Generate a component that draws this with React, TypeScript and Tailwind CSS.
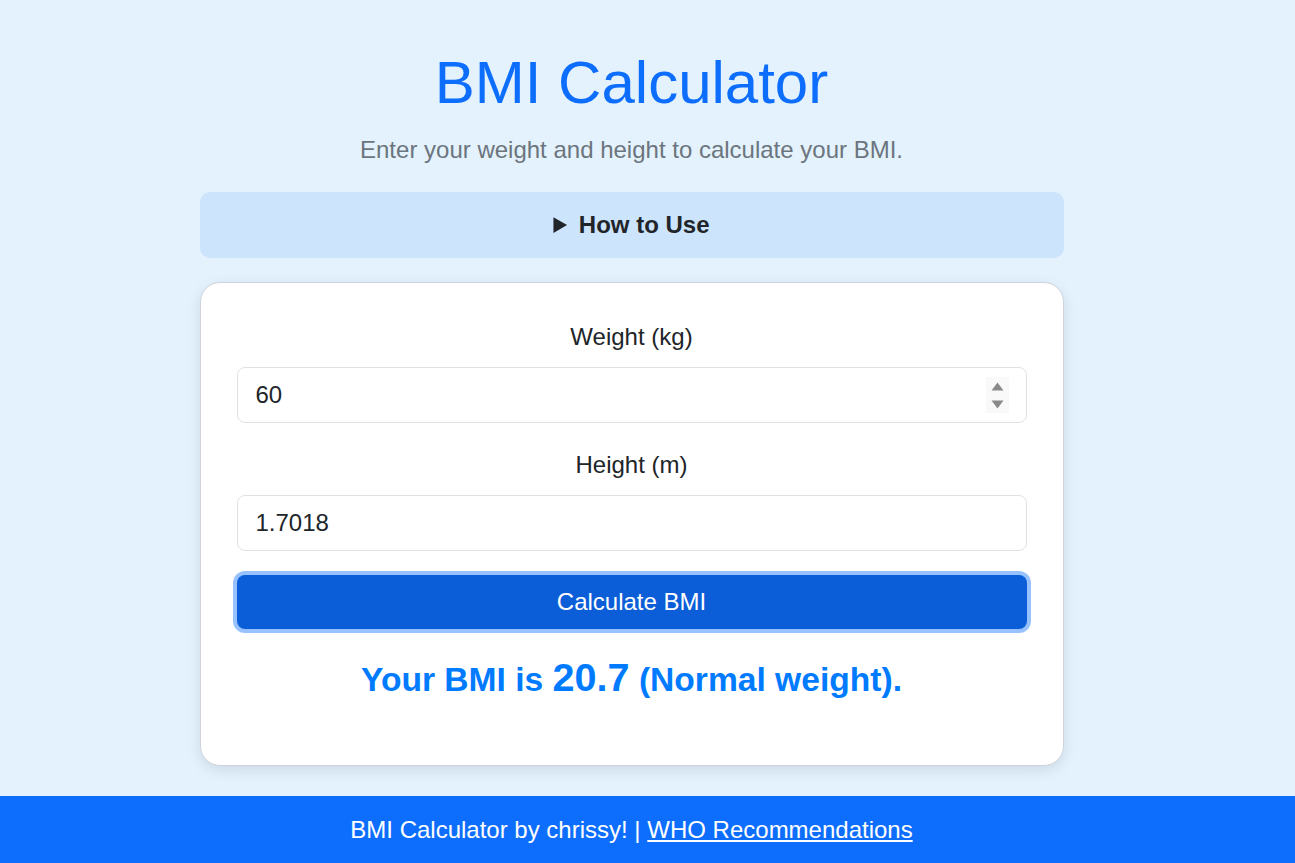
import { useState } from "react";

const font = { fontFamily: '"Liberation Sans", Arial, sans-serif' };

export default function App() {
  const [weight, setWeight] = useState("60");
  const [height, setHeight] = useState("1.7018");

  return (
    <div className="min-h-[863px] bg-[#e3f2fd] flex flex-col text-[#212529]" style={font}>
      <main className="w-[1263px] flex flex-col items-center pt-[47px]">
        <h1 className="text-[60px] leading-[72px] text-[#0d6efd]">BMI Calculator</h1>
        <p className="mt-[17px] text-[24px] leading-[28px] text-[#6c757d]">
          Enter your weight and height to calculate your BMI.
        </p>

        <details className="mt-[28px] w-[864px] rounded-[10px] bg-[#cce4fc]">
          <summary className="py-[19px] text-center text-[24px] leading-[28px] font-bold text-[#212529] cursor-pointer">
            How to Use
          </summary>
        </details>

        <div className="mt-[24px] w-[864px] h-[484px] bg-white rounded-[20px] border border-[#cfd4da] shadow-[0_4px_14px_rgba(0,0,0,0.1)] px-[36px] pt-[40px] flex flex-col">
          <label className="text-center text-[24px] leading-[28px]">Weight (kg)</label>
          <div className="relative mt-[16px]">
            <input
              value={weight}
              onChange={(e) => setWeight(e.target.value)}
              className="w-full h-[56px] rounded-[8px] border border-[#dee2e6] pl-[18px] text-[24px] outline-none"
            />
            <div className="absolute right-[18px] top-[10px] w-[23px] h-[36px] bg-[#f9f9f9] flex flex-col items-center justify-center gap-[9px]">
              <svg width="13" height="9" viewBox="0 0 13 9"><path d="M6.5 0.5 L12.5 8.5 L0.5 8.5 Z" fill="#8a8a8a" /></svg>
              <svg width="13" height="9" viewBox="0 0 13 9"><path d="M0.5 0.5 L12.5 0.5 L6.5 8.5 Z" fill="#8a8a8a" /></svg>
            </div>
          </div>

          <label className="mt-[28px] text-center text-[24px] leading-[28px]">Height (m)</label>
          <input
            value={height}
            onChange={(e) => setHeight(e.target.value)}
            className="mt-[16px] w-full h-[56px] rounded-[8px] border border-[#dee2e6] pl-[18px] text-[24px] outline-none"
          />

          <button className="mt-[24px] h-[54px] w-full rounded-[8px] bg-[#0b5ed7] text-white text-[24px] shadow-[0_0_0_4px_#98c2fe]">
            Calculate BMI
          </button>

          <p className="mt-[28px] text-center text-[33.6px] leading-[40px] font-bold text-[#007bff]">
            Your BMI is <span className="text-[39.6px]">20.7</span> (Normal weight).
          </p>
        </div>
      </main>

      <footer className="mt-[30px] h-[67px] bg-[#0d6efd] text-white">
        <div className="w-[1263px] h-full flex items-center justify-center text-[24px]">
          <span>
            BMI Calculator by chrissy! |{" "}
            <a href="#" className="underline">WHO Recommendations</a>
          </span>
        </div>
      </footer>
    </div>
  );
}
